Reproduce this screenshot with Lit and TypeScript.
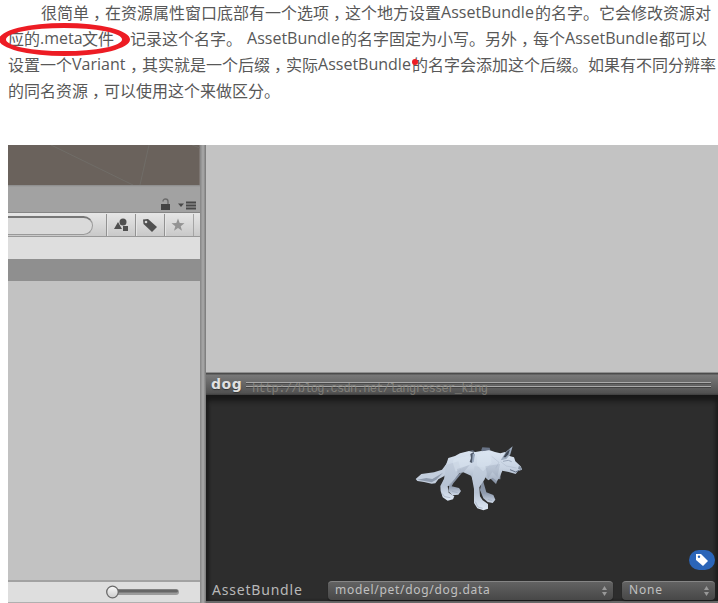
import { LitElement, html, css } from "lit";
import { customElement } from "lit/decorators.js";

@customElement("project-pane")
class ProjectPane extends LitElement {
  static styles = css`
    :host { display: flex; flex-direction: column; height: 458px; background: #c2c2c2; }
    .scene { height: 40px; background: #6a625c; overflow: hidden; flex: none; box-shadow: inset -1px 0 #7c7571; }
    svg { display: block; flex: none; }
    .tabs { box-sizing: border-box; height: 28px; flex: none; background: linear-gradient(#8a8a8a, #a2a2a2 2px); border-bottom: 1px solid #858585;
      display: flex; justify-content: flex-end; align-items: flex-end; gap: 8px; padding: 0 4px 1px 0; }
    .bar { box-sizing: border-box; height: 24px; flex: none; background: linear-gradient(#e6e6e6, #c9c9c9); border-bottom: 1px solid #999;
      display: flex; align-items: stretch; padding-top: 1px; }
    .search { box-sizing: border-box; width: 85px; height: 19px; margin: 2px 13px 0 0; background: #dadada; border: 1px solid #999; border-top: 2px solid #777;
      border-left: 0; border-radius: 0 10px 10px 0; }
    .btn { box-sizing: border-box; width: 29px; border-left: 1px solid #929292; box-shadow: inset 1px 0 #e4e4e4; display: flex; align-items: center; justify-content: center; }
    .star { padding-right: 2px; }
    .end { flex: 1; border-left: 1px solid #a5a5a5; }
    .crumb { height: 22px; flex: none; background: #dedede; }
    .selected { height: 22px; flex: none; background: #8f8f8f; }
    .list { flex: 1; }
    .foot { box-sizing: border-box; height: 23px; flex: none; background: #dedede; border-top: 2px solid #a2a2a2; border-bottom: 1px solid #b0b0b0; display: flex; justify-content: flex-end; align-items: center; padding-right: 19px; }
  `;
  render() {
    return html`
      <div class="scene"><svg width="192" height="40" fill="none" stroke="#706d68"><path d="M43 0L125 40M141 0L132 40M184 0l8 3" /></svg></div>
      <div class="tabs">
        <svg width="9" height="13" viewBox="0 0 9 13"><path d="M0 6h9v6H0z" fill="#444" /><path d="M2 3.500q0-2.500 2.500-2.500T7 3.500V6" fill="none" stroke="#6b6b6b" stroke-width="1.400" /></svg>
        <svg width="18" height="11" viewBox="0 0 18 11" fill="#484848"><path d="M0 3.500h6L3 7z" /><path d="M8 1.500h10v2H8zM8 4.500h10v2H8zM8 7.500h10v2H8z" /></svg>
      </div>
      <div class="bar">
        <div class="search"></div>
        <div class="btn"><svg width="15" height="14" viewBox="0 0 15 14" fill="#505050"><circle cx="9" cy="4" r="3.500" /><path d="M4 4l4 7H0zM9 8h5v5H9z" /></svg></div>
        <div class="btn"><svg width="16" height="15" viewBox="0 0 16 15"><path d="M1 1.500L6 1l9 8-5 5-8.500-8z" fill="#505050" /><circle cx="4" cy="4" r="1.300" fill="#d6d6d6" /></svg></div>
        <div class="btn star"><svg width="14" height="14" viewBox="0 0 14 14"><path d="M7 .5l1.700 4.500 4.800.2-3.800 3 1.300 4.600L7 10.100l-4 2.700 1.300-4.600-3.800-3 4.800-.2z" fill="#939393" /></svg></div>
        <div class="end"></div>
      </div>
      <div class="crumb"></div><div class="selected"></div><div class="list"></div>
      <div class="foot"><svg width="75" height="14" viewBox="0 0 75 14">
        <defs><linearGradient id="k" x2="0" y2="1"><stop stop-color="#fafafa" /><stop offset="1" stop-color="#ccc" /></linearGradient></defs>
        <rect x="8" y="4" width="65" height="6" rx="3" fill="#9b9b9b" /><rect x="9" y="4.500" width="63" height="3" rx="1.500" fill="#666" />
        <circle cx="6.500" cy="7" r="5.800" fill="url(#k)" stroke="#696969" stroke-width="1.300" /></svg></div>`;
  }
}

@customElement("inspector-pane")
class InspectorPane extends LitElement {
  static styles = css`
    :host { display: flex; flex-direction: column; height: 458px; background: #c3c3c3; color: #b8b8b8; }
    .blank { flex: 1; }
    .title { box-sizing: border-box; height: 23px; flex: none; position: relative; display: flex; align-items: center; gap: 4px; padding: 0 7px 0 5px;
      border-top: 1px solid #909090; background: linear-gradient(#4c4c4c 0 1px, #797979 2px, #525252 20px, #3d3d3d); }
    .name { font: bold 14px/20px "DejaVu Sans", sans-serif; width: 31px; color: #e0e0e0; text-shadow: 0 1px 1px #333; letter-spacing: .5px; white-space: nowrap; }
    .grip { flex: 1; height: 5px; margin-top: 1px; border-top: 1px solid #aaa; border-bottom: 1px solid #aaa; box-shadow: 0 1px #404040, inset 0 1px #484848; box-sizing: border-box; }
    .mark { position: absolute; left: 46px; top: 8px; opacity: .75; }
    .mark text { font: 12px "Liberation Mono", monospace; }
    .view { box-sizing: border-box; height: 208px; flex: none; display: flex; flex-direction: column; background: #2d2d2d;
      box-shadow: inset 0 7px 5px -1px #181818, inset 3px 0 3px #202020, inset -3px 0 3px #222; border-bottom: 2px solid #686868; }
    .stage { height: 155px; position: relative; }
    .wolf { position: absolute; left: 194px; top: 35px; }
    .labels { height: 21px; display: flex; justify-content: flex-end; padding-right: 3px; }
    .pill { width: 26px; height: 20px; border-radius: 10px; background: #2b65b8; display: flex; align-items: center; justify-content: center; }
    .fields { height: 20px; margin-top: 9px; display: flex; align-items: flex-start; padding: 0 3px 0 6px; font: 14px/20px "Noto Sans", sans-serif; }
    .label { width: 116px; font-size: 14px; letter-spacing: .8px; }
    .select { box-sizing: border-box; height: 19px; margin-top: 1px; border-radius: 4px; border-top: 1px solid #858585; background: linear-gradient(#626262, #474747); box-shadow: 0 1px 1px #191919;
      display: flex; justify-content: space-between; align-items: center; padding: 0 6px 0 7px; font-size: 12px; line-height: 16px; color: #c0c0c0; }
    .select span { margin-top: -2px; }
    .path { width: 285px; margin-right: 9px; letter-spacing: .7px; }
    .variant { flex: 1; letter-spacing: .8px; }
  `;
  private arrows() {
    return html`<svg width="5" height="10" viewBox="0 0 5 10" fill="#999"><path d="M0 4l2.500-4L5 4zM0 6h5l-2.500 4z" /></svg>`;
  }
  render() {
    return html`
      <div class="blank"></div>
      <div class="title"><span class="name">dog</span><span class="grip"></span>
        <svg class="mark" width="245" height="16" fill="#918f87"><text x="0" y="11" textLength="236" lengthAdjust="spacing">http://blog.csdn.net/langresser_king</text></svg>
      </div>
      <div class="view">
        <div class="stage"><svg class="wolf" width="140" height="90" viewBox="0 0 420 270">
          <defs>
            <linearGradient id="fur" x2="0" y2="1"><stop stop-color="#dce6f2" /><stop offset=".5" stop-color="#c8d3e2" /><stop offset="1" stop-color="#99a5b7" /></linearGradient>
            <linearGradient id="leg" x2="0" y2="1"><stop stop-color="#c3cedd" /><stop offset=".6" stop-color="#b6c2d3" /><stop offset="1" stop-color="#dfe9f5" /></linearGradient>
            <linearGradient id="far" x2="0" y2="1"><stop stop-color="#7f8a9c" /><stop offset=".6" stop-color="#8e9aad" /><stop offset="1" stop-color="#cdd8e7" /></linearGradient>
          </defs>
          <path d="M145 94L126 119 102 127 64 132 47 147 52 153 72 156 95 161 106 160 115 148 133 138 146 122z" fill="#c3cedd" />
          <path d="M52 149l27-5 18 3 32-19-20 21-14 8z" fill="#8f9bad" />
          <path d="M188 126L160 160 155 169 177 174 183 183 175 194 157 196 145 184 148 165 160 140z" fill="url(#far)" />
          <path d="M247 145L259 187 280 195 286 209 278 219 263 216 250 205 240 180z" fill="url(#far)" />
          <path d="M260 120L272 146 288 162 294 147 301 148 302 115z" fill="#8c97a9" />
          <path d="M145 84L165 78 180 70 207 63 226 66 265 59 285 66 301 70 315 66 331 79 342 82 346 94 362 109 366 119 354 123 347 132 326 126 307 122 298 144 290 153 278 143 265 151 255 142 247 150 235 146 220 153 213 137 190 127 178 130 165 142 150 168 126 168 134 142 137 108z" fill="url(#fur)" />
          <path d="M137 105L133 145 121 168 122 183 128 202 143 212 159 208 163 199 146 188 143 169 164 147 183 120 175 94z" fill="url(#leg)" />
          <path d="M224 108L216 145 222 177 222 219 232 235 250 241 264 236 264 222 248 211 240 199 238 172 254 148 264 115z" fill="url(#leg)" />
          <path d="M162 86l44-9 12 22-29 14-22 12-9-28zM231 74l37-9 7 34-26 25-18-18z" fill="#dce6f2" opacity=".45" />
          <path d="M171 117l38-12-18 22-18 5zM256 109l44-7-8 40-15-16-13 20z" fill="#8794a8" opacity=".25" />
          <path d="M211 72l10-6 2 10-7 23-7-3 4-12z" fill="#4f5969" /><path d="M218 71l7 1-4 24-5 2z" fill="#9cabc0" />
          <path d="M244 59l3-7 22 1 2 7-26 4zM207 63l12-2 5 4z" fill="#687386" />
          <path d="M302 91L317 66 338 49 331 73 319 87z" fill="#9baabd" /><path d="M310 82l10-16 10-8-5 15-8 9z" fill="#3d4654" />
          <path d="M309 94l16-3 10 4" stroke="#7e8ca1" stroke-width="2" fill="none" />
          <path d="M330 119l17 7 10-5" stroke="#667287" stroke-width="3" fill="none" /><path d="M357 107l9 8-3 6-9-5z" fill="#8995a6" />
          <path d="M302 95l17 13 30 6M275 79l22 18-10 18" stroke="#8999ad" stroke-width="2" opacity=".35" fill="none" />
          <path d="M126 190l8 10 17 3M226 215l8 16 14 4M156 184l17 4M263 208l14 4" stroke="#9da9bb" stroke-width="2" fill="none" />
        </svg></div>
        <div class="labels"><span class="pill"><svg width="14" height="14" viewBox="0 0 14 14"><path d="M1 1h5l7 7-5 5-7-6z" fill="#fff" /><circle cx="4" cy="3.800" r="1.200" fill="#2b65b8" /></svg></span></div>
        <div class="fields"><span class="label">AssetBundle</span>
          <span class="select path"><span>model/pet/dog/dog.data</span>${this.arrows()}</span>
          <span class="select variant"><span>None</span>${this.arrows()}</span></div>
      </div>`;
  }
}

@customElement("app-root")
class AppRoot extends LitElement {
  static styles = css`
    :host { display: block; position: relative; width: 718px; height: 603px; overflow: hidden; background: #fff; }
    .article { box-sizing: border-box; height: 145px; padding-left: 8px; color: #585858; font: 16px/26px "Noto Sans CJK SC", sans-serif; white-space: nowrap; }
    .line { height: 26px; line-height: 24px; display: flex; }
    .first { padding-left: 33px; }
    .latin { font-family: "Open Sans", "Noto Sans", sans-serif; width: 94px; }
    .meta { width: 42px; }
    .variant { width: 54px; }
    .gap { width: 5px; }
    .comma { box-sizing: border-box; width: 16px; padding-left: 4px; font-feature-settings: "halt"; }
    .covered { color: #fff; }
    .window { display: grid; grid-template-columns: 192px 6px 1fr; margin-left: 8px; height: 458px; }
    .split { background: linear-gradient(90deg, #8b8b8b 1px, #a3a3a3 2px 4px, #808080 5px); }
    .note { position: absolute; left: 0; top: 0; }
  `;
  render() {
    const ab = html`<span class="latin">AssetBundle</span>`;
    const c = html`<span class="comma">，</span>`;
    return html`
      <div class="article">
        <div class="line first">很简单${c}在资源属性窗口底部有一个选项${c}这个地方设置${ab}的名字。它会修改资源对</div>
        <div class="line">应的<span class="latin meta">.meta</span>文件<span class="covered">，</span>记录这个名字。<span class="gap"></span>${ab}的名字固定为小写。另外${c}每个${ab}都可以</div>
        <div class="line">设置一个<span class="latin variant">Variant</span>${c}其实就是一个后缀${c}实际${ab}的名字会添加这个后缀。如果有不同分辨率</div>
        <div class="line">的同名资源${c}可以使用这个来做区分。</div>
      </div>
      <div class="window"><project-pane></project-pane><div class="split"></div><inspector-pane></inspector-pane></div>
      <svg class="note" width="430" height="80"><path fill="#ed1c24" fill-rule="evenodd" d="M-1 39.500a65.500 16.500 0 1 0 131 0a65.500 16.500 0 1 0-131 0zM6 39.500a58 11.500 0 1 0 116 0a58 11.500 0 1 0-116 0z" /><circle cx="415" cy="62" r="3" fill="#ed1c24" /></svg>`;
  }
}
